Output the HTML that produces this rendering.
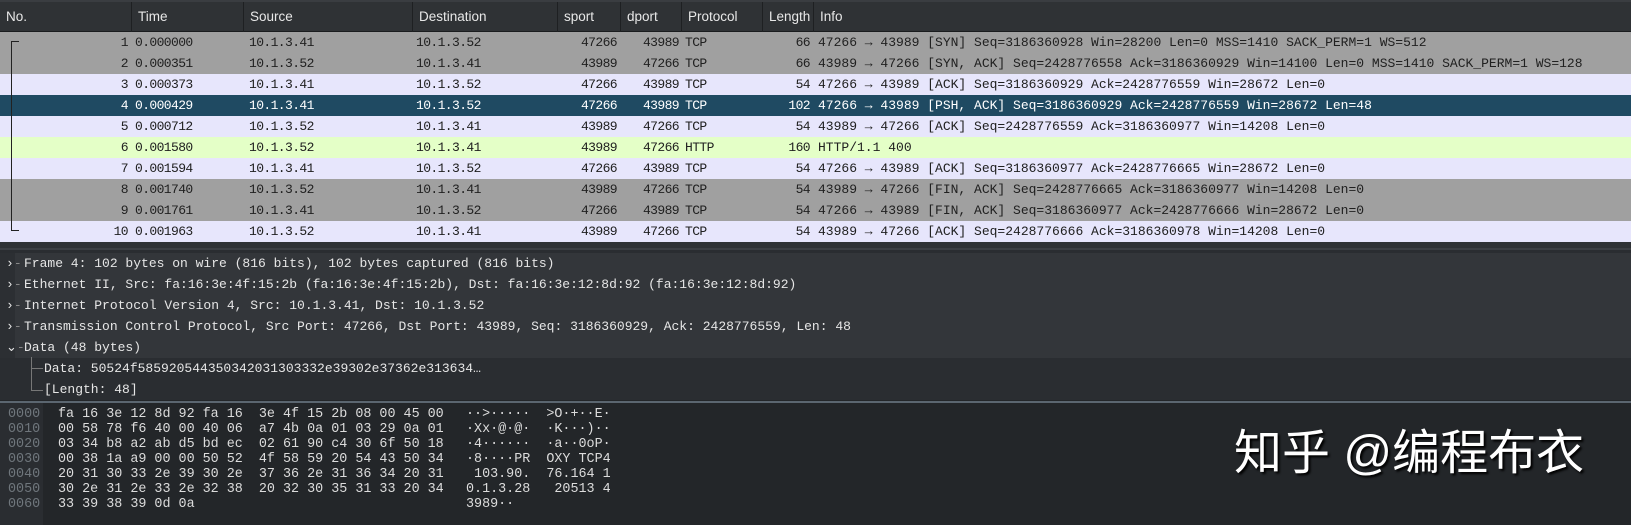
<!DOCTYPE html>
<html><head><meta charset="utf-8"><style>
*{margin:0;padding:0;box-sizing:border-box}
body{width:1631px;height:523px;background:#232629;overflow:hidden;position:relative;font-family:"Liberation Mono",monospace;font-size:13px}
.hdr{position:absolute;left:0;top:0;width:1631px;height:32px;background:#2f3235;border-top:2px solid #3a3d41;border-bottom:1px solid #1a1c1e}
.hdr div{position:absolute;top:0;height:30px;line-height:30px;color:#e8e8e8;font-family:"Liberation Sans",sans-serif;font-size:13.5px;padding-left:6px;border-right:1px solid #1e2022;white-space:nowrap;overflow:hidden}
.row{position:absolute;left:0;width:1631px;height:21px;line-height:21px;color:#202020;white-space:pre}
.row span{position:absolute;top:0;letter-spacing:-0.6px}
.row .info{letter-spacing:0}
.g{background:#a0a0a0}.l{background:#e7e6fc}.s{background:#1f4a62;color:#fff}.h{background:#e4ffc7}
.r{text-align:right}
.det{position:absolute;left:0;top:248px;width:1631px;height:152px;background:#2a2d31;border-top:2px solid #3c3f43}
.dr{position:absolute;left:0;height:21px;line-height:21px;color:#e6e6e6;white-space:pre}
.dr b{position:absolute;left:0;font-weight:normal}
.hex{position:absolute;left:0;top:401px;width:1631px;height:122px;background:#232629;border-top:2px solid #5b6670}
.hl{position:absolute;left:0;width:1000px;height:15px;line-height:15px;white-space:pre;color:#dcdcdc;font-size:13.4px}
.hl span{position:absolute;top:0}
.off{color:#6f767c;left:8px}
.hx{left:58px}.as{left:466px}
</style></head><body>
<div class="hdr">
<div style="left:0;width:132px">No.</div>
<div style="left:132px;width:112px">Time</div>
<div style="left:244px;width:169px">Source</div>
<div style="left:413px;width:145px">Destination</div>
<div style="left:558px;width:63px">sport</div>
<div style="left:621px;width:61px">dport</div>
<div style="left:682px;width:81px">Protocol</div>
<div style="left:763px;width:51px">Length</div>
<div style="left:814px;width:817px;border:none">Info</div>
</div>

<div class="row g" style="top:32px"><span class="r" style="right:1503px">1</span><span style="left:135px">0.000000</span><span style="left:249px">10.1.3.41</span><span style="left:416px">10.1.3.52</span><span class="r" style="right:1014px">47266</span><span class="r" style="right:952px">43989</span><span style="left:685px">TCP</span><span class="r" style="right:821px">66</span><span class="info" style="left:818px">47266 → 43989 [SYN] Seq=3186360928 Win=28200 Len=0 MSS=1410 SACK_PERM=1 WS=512</span></div>
<div class="row g" style="top:53px"><span class="r" style="right:1503px">2</span><span style="left:135px">0.000351</span><span style="left:249px">10.1.3.52</span><span style="left:416px">10.1.3.41</span><span class="r" style="right:1014px">43989</span><span class="r" style="right:952px">47266</span><span style="left:685px">TCP</span><span class="r" style="right:821px">66</span><span class="info" style="left:818px">43989 → 47266 [SYN, ACK] Seq=2428776558 Ack=3186360929 Win=14100 Len=0 MSS=1410 SACK_PERM=1 WS=128</span></div>
<div class="row l" style="top:74px"><span class="r" style="right:1503px">3</span><span style="left:135px">0.000373</span><span style="left:249px">10.1.3.41</span><span style="left:416px">10.1.3.52</span><span class="r" style="right:1014px">47266</span><span class="r" style="right:952px">43989</span><span style="left:685px">TCP</span><span class="r" style="right:821px">54</span><span class="info" style="left:818px">47266 → 43989 [ACK] Seq=3186360929 Ack=2428776559 Win=28672 Len=0</span></div>
<div class="row s" style="top:95px"><span class="r" style="right:1503px">4</span><span style="left:135px">0.000429</span><span style="left:249px">10.1.3.41</span><span style="left:416px">10.1.3.52</span><span class="r" style="right:1014px">47266</span><span class="r" style="right:952px">43989</span><span style="left:685px">TCP</span><span class="r" style="right:821px">102</span><span class="info" style="left:818px">47266 → 43989 [PSH, ACK] Seq=3186360929 Ack=2428776559 Win=28672 Len=48</span></div>
<div class="row l" style="top:116px"><span class="r" style="right:1503px">5</span><span style="left:135px">0.000712</span><span style="left:249px">10.1.3.52</span><span style="left:416px">10.1.3.41</span><span class="r" style="right:1014px">43989</span><span class="r" style="right:952px">47266</span><span style="left:685px">TCP</span><span class="r" style="right:821px">54</span><span class="info" style="left:818px">43989 → 47266 [ACK] Seq=2428776559 Ack=3186360977 Win=14208 Len=0</span></div>
<div class="row h" style="top:137px"><span class="r" style="right:1503px">6</span><span style="left:135px">0.001580</span><span style="left:249px">10.1.3.52</span><span style="left:416px">10.1.3.41</span><span class="r" style="right:1014px">43989</span><span class="r" style="right:952px">47266</span><span style="left:685px">HTTP</span><span class="r" style="right:821px">160</span><span class="info" style="left:818px">HTTP/1.1 400</span></div>
<div class="row l" style="top:158px"><span class="r" style="right:1503px">7</span><span style="left:135px">0.001594</span><span style="left:249px">10.1.3.41</span><span style="left:416px">10.1.3.52</span><span class="r" style="right:1014px">47266</span><span class="r" style="right:952px">43989</span><span style="left:685px">TCP</span><span class="r" style="right:821px">54</span><span class="info" style="left:818px">47266 → 43989 [ACK] Seq=3186360977 Ack=2428776665 Win=28672 Len=0</span></div>
<div class="row g" style="top:179px"><span class="r" style="right:1503px">8</span><span style="left:135px">0.001740</span><span style="left:249px">10.1.3.52</span><span style="left:416px">10.1.3.41</span><span class="r" style="right:1014px">43989</span><span class="r" style="right:952px">47266</span><span style="left:685px">TCP</span><span class="r" style="right:821px">54</span><span class="info" style="left:818px">43989 → 47266 [FIN, ACK] Seq=2428776665 Ack=3186360977 Win=14208 Len=0</span></div>
<div class="row g" style="top:200px"><span class="r" style="right:1503px">9</span><span style="left:135px">0.001761</span><span style="left:249px">10.1.3.41</span><span style="left:416px">10.1.3.52</span><span class="r" style="right:1014px">47266</span><span class="r" style="right:952px">43989</span><span style="left:685px">TCP</span><span class="r" style="right:821px">54</span><span class="info" style="left:818px">47266 → 43989 [FIN, ACK] Seq=3186360977 Ack=2428776666 Win=28672 Len=0</span></div>
<div class="row l" style="top:221px"><span class="r" style="right:1503px">10</span><span style="left:135px">0.001963</span><span style="left:249px">10.1.3.52</span><span style="left:416px">10.1.3.41</span><span class="r" style="right:1014px">43989</span><span class="r" style="right:952px">47266</span><span style="left:685px">TCP</span><span class="r" style="right:821px">54</span><span class="info" style="left:818px">43989 → 47266 [ACK] Seq=2428776666 Ack=3186360978 Win=14208 Len=0</span></div>
<div style="position:absolute;left:11px;top:41px;width:8px;height:190px;border-left:1px solid #222;border-top:1px solid #222;border-bottom:1px solid #222"></div>
<div style="position:absolute;left:0;top:242px;width:1631px;height:6px;background:#2f3235"></div>

<div class="det">
<div style="position:absolute;left:15px;top:3px;width:1616px;height:105px;background:#33363a"></div>
<div style="position:absolute;left:0;top:3px;width:15px;height:105px;background:#2c2f33"></div>
<div class="dr" style="top:3px;left:24px"><b style="left:-18px">›<span style="color:#888">-</span></b>Frame 4: 102 bytes on wire (816 bits), 102 bytes captured (816 bits)</div>
<div class="dr" style="top:24px;left:24px"><b style="left:-18px">›<span style="color:#888">-</span></b>Ethernet II, Src: fa:16:3e:4f:15:2b (fa:16:3e:4f:15:2b), Dst: fa:16:3e:12:8d:92 (fa:16:3e:12:8d:92)</div>
<div class="dr" style="top:45px;left:24px"><b style="left:-18px">›<span style="color:#888">-</span></b>Internet Protocol Version 4, Src: 10.1.3.41, Dst: 10.1.3.52</div>
<div class="dr" style="top:66px;left:24px"><b style="left:-18px">›<span style="color:#888">-</span></b>Transmission Control Protocol, Src Port: 47266, Dst Port: 43989, Seq: 3186360929, Ack: 2428776559, Len: 48</div>
<div class="dr" style="top:87px;left:24px"><b style="left:-18px">⌄<span style="color:#888">-</span></b>Data (48 bytes)</div>
<div style="position:absolute;left:31px;top:107px;width:1px;height:34px;background:#777"></div>
<div style="position:absolute;left:31px;top:118px;width:12px;height:1px;background:#777"></div>
<div style="position:absolute;left:31px;top:140px;width:12px;height:1px;background:#777"></div>
<div class="dr" style="top:108px;left:44px">Data: 50524f585920544350342031303332e39302e37362e313634…</div>
<div class="dr" style="top:129px;left:44px">[Length: 48]</div>
</div>

<div class="hex">
<div style="position:absolute;left:0;top:0;width:43px;height:122px;background:#2a2d31"></div>
<div class="hl" style="top:4px"><span class="off">0000</span><span class="hx">fa 16 3e 12 8d 92 fa 16  3e 4f 15 2b 08 00 45 00</span><span class="as">··>·····  >O·+··E·</span></div>
<div class="hl" style="top:19px"><span class="off">0010</span><span class="hx">00 58 78 f6 40 00 40 06  a7 4b 0a 01 03 29 0a 01</span><span class="as">·Xx·@·@·  ·K···)··</span></div>
<div class="hl" style="top:34px"><span class="off">0020</span><span class="hx">03 34 b8 a2 ab d5 bd ec  02 61 90 c4 30 6f 50 18</span><span class="as">·4······  ·a··0oP·</span></div>
<div class="hl" style="top:49px"><span class="off">0030</span><span class="hx">00 38 1a a9 00 00 50 52  4f 58 59 20 54 43 50 34</span><span class="as">·8····PR  OXY TCP4</span></div>
<div class="hl" style="top:64px"><span class="off">0040</span><span class="hx">20 31 30 33 2e 39 30 2e  37 36 2e 31 36 34 20 31</span><span class="as"> 103.90.  76.164 1</span></div>
<div class="hl" style="top:79px"><span class="off">0050</span><span class="hx">30 2e 31 2e 33 2e 32 38  20 32 30 35 31 33 20 34</span><span class="as">0.1.3.28   20513 4</span></div>
<div class="hl" style="top:94px"><span class="off">0060</span><span class="hx">33 39 38 39 0d 0a</span><span class="as">3989··</span></div>
<div style="position:absolute;left:1234px;top:22px;color:#fff;font-family:'Liberation Sans','Noto Sans CJK SC',sans-serif;font-size:48px;line-height:58px;text-shadow:2px 2px 2px #000;white-space:nowrap">知乎 @编程布衣</div>
</div>
</body></html>
